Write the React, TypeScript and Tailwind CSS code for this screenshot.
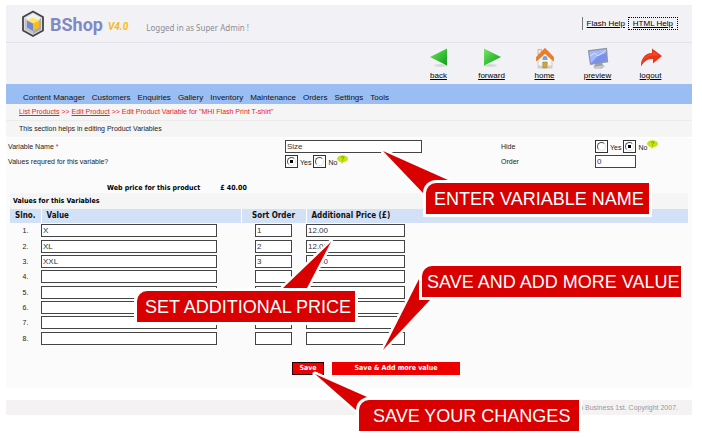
import type { ReactNode } from "react";

const menu = ["Content Manager", "Customers", "Enquiries", "Gallery", "Inventory", "Maintenance", "Orders", "Settings", "Tools"];

const rows = [
  { value: "X", order: "1", price: "12.00" },
  { value: "XL", order: "2", price: "12.00" },
  { value: "XXL", order: "3", price: "12.00" },
  { value: "", order: "", price: "" },
  { value: "", order: "", price: "" },
  { value: "", order: "", price: "" },
  { value: "", order: "", price: "" },
  { value: "", order: "", price: "" },
];

const field = "block h-[13px] border border-[#444] bg-white px-px text-[8px] leading-[11px] text-[#333] outline-none";
const verdana = "font-['DejaVu_Sans_Condensed','DejaVu_Sans',sans-serif] font-bold";

function Logo() {
  return (
    <svg width="24" height="28" viewBox="0 0 24 28" aria-hidden="true">
      <path d="M12 1.500 22 7v13.500L12 26 2 20.500V7z" fill="#d9dadd" stroke="#444448" strokeWidth="1.800" strokeLinejoin="round" />
      <path d="M12 3.500 20 8 12 12.500 4 8z" fill="#f0f1f3" />
      <path d="M4 8v11.500l8 4.500v-4z" fill="#c3c4c8" />
      <path d="M20 8v11.500L12 24v-4z" fill="#a9abb0" />
      <path d="M12 7.500 18 10.500 12 13.500 6 10.500z" fill="#ffe65c" />
      <path d="M6 10.500v7l6 3.500v-7.500z" fill="#7388d2" />
      <path d="M18 10.500v7L12 21v-7.500z" fill="#f9bd15" />
    </svg>
  );
}

function BackIcon() {
  return (
    <svg width="22" height="22" viewBox="0 0 22 22" aria-hidden="true">
      <defs>
        <linearGradient id="greenBack" x1="0" y1="0" x2="1" y2="1">
          <stop offset="0" stopColor="#7fe36c" />
          <stop offset="0.500" stopColor="#3bc43a" />
          <stop offset="1" stopColor="#109a1c" />
        </linearGradient>
      </defs>
      <ellipse cx="13" cy="18.500" rx="7" ry="1.500" fill="#d5d8d9" />
      <path d="M2 10 19 1.500v17z" fill="url(#greenBack)" />
    </svg>
  );
}

function ForwardIcon() {
  return (
    <svg width="22" height="22" viewBox="0 0 22 22" aria-hidden="true">
      <defs>
        <linearGradient id="greenForward" x1="0" y1="0" x2="1" y2="1">
          <stop offset="0" stopColor="#7fe36c" />
          <stop offset="0.500" stopColor="#3bc43a" />
          <stop offset="1" stopColor="#109a1c" />
        </linearGradient>
      </defs>
      <ellipse cx="9" cy="18.500" rx="7" ry="1.500" fill="#d5d8d9" />
      <path d="M20 10 3 1.500v17z" fill="url(#greenForward)" />
    </svg>
  );
}

function HomeIcon() {
  return (
    <svg width="22" height="22" viewBox="0 0 22 22" aria-hidden="true">
      <path d="M4 2.500h3.500V8H4z" fill="#f3e9e2" stroke="#c98a5c" strokeWidth="0.600" />
      <path d="M4 11 11 5l7 6v10H4z" fill="#f7f6f1" stroke="#b8b4a8" strokeWidth="0.600" />
      <path d="M11 1.200 2.500 10v4L11 6.500l8.500 7.500v-4z" fill="#ee7d26" stroke="#cf5f12" strokeWidth="0.500" />
      <path d="M8.500 11.500a2.500 2.500 0 0 1 5 0v1.500h-5z" fill="#78a3e0" />
      <path d="M8.800 15h4.400v6H8.800z" fill="#c9a64a" stroke="#9c7b2b" strokeWidth="0.500" />
      <path d="M4 18.500h4v2.500H4zM14 18.500h4v2.500h-4z" fill="#cfcfc8" />
    </svg>
  );
}

function PreviewIcon() {
  return (
    <svg width="22" height="22" viewBox="0 0 22 22" aria-hidden="true">
      <path d="M9 16h6l2 3.500-2 2H8l-1.500-1.500z" fill="#9ea2aa" />
      <path d="M6.500 19.800 17 18.500l1.500 1.300-9 2z" fill="#c9ccd3" />
      <path d="M.8 3.200 20 .8l1.200 14.400L3 18z" fill="#8f97a9" />
      <path d="M2.200 4.400 18.600 2.200l1 11.600L4 16.200z" fill="#7890f0" />
      <path d="M2.200 4.400 18.600 2.200l.3 3.800L11 9 4 16.200z" fill="#a5b8fb" />
      <path d="m3 9 5-3 3 3 8-6" fill="none" stroke="#dbe4ff" strokeWidth="0.900" />
    </svg>
  );
}

function LogoutIcon() {
  return (
    <svg width="22" height="22" viewBox="0 0 22 22" aria-hidden="true">
      <path d="M1 19.500C.5 12 5 6 12 6V1.500L22 9l-9 7.500V12C8 11.500 4 14 1 19.500z" fill="#ea3519" />
      <path d="M2 15.500C3 10 7 7.200 13 7.200V4l6 4.800C11 8 5 9.500 2 15.500z" fill="#f04a30" />
    </svg>
  );
}

const tools: { label: string; icon: ReactNode }[] = [
  { label: "back", icon: <BackIcon /> },
  { label: "forward", icon: <ForwardIcon /> },
  { label: "home", icon: <HomeIcon /> },
  { label: "preview", icon: <PreviewIcon /> },
  { label: "logout", icon: <LogoutIcon /> },
];

function HelpBubble() {
  return (
    <svg width="11" height="9" viewBox="0 0 11 9" className="-mt-1" role="img" aria-label="Help">
      <ellipse cx="5.500" cy="3.800" rx="5.500" ry="3.500" fill="#c3e514" />
      <path d="m4 6 .5 3L8 6z" fill="#c3e514" />
      <path d="M4.300 2.800c0-1.600 2.600-1.500 2.500 0 0 .9-1.200.9-1.200 1.800M5.600 5.500v.8" fill="none" stroke="#6f8a00" strokeWidth="0.900" />
    </svg>
  );
}

function Radio({ name, label, checked }: { name: string; label: string; checked?: boolean }) {
  return (
    <label className="flex items-center gap-0.5">
      <span className="flex size-[13px] items-center justify-center border border-[#333] bg-white">
        <input
          type="radio"
          name={name}
          defaultChecked={checked}
          className="size-[9px] appearance-none rounded-full border border-t-[#555] border-r-[#e4e4e4] border-b-[#e4e4e4] border-l-[#555] checked:bg-[radial-gradient(circle,#000_30%,transparent_40%)]"
        />
      </span>
      <span className="pt-0.5">{label}</span>
    </label>
  );
}

function RadioPair({ name, value }: { name: string; value: "Yes" | "No" }) {
  return (
    <div className="flex items-center">
      <div className="flex items-center gap-0.5">
        <Radio name={name} label="Yes" checked={value === "Yes"} />
        <Radio name={name} label="No" checked={value === "No"} />
      </div>
      <HelpBubble />
    </div>
  );
}

function Tail({ points }: { points: string }) {
  return (
    <g strokeLinejoin="round">
      <polygon points={points} fill="#fff" stroke="#fff" strokeWidth="5" />
      <polygon points={points} fill="#d80000" />
    </g>
  );
}

function Callout({ className, children }: { className: string; children: string }) {
  return (
    <div className={`absolute h-[31px] whitespace-nowrap rounded-tl-[10px] bg-[#d80000] text-[18px] leading-[32px] text-white ring-3 ring-white ${className}`}>
      {children}
    </div>
  );
}

export default function App() {
  return (
    <div className="relative bg-white pt-[5px] pr-[10px] pb-[23px] pl-[6px] font-['Liberation_Sans',Arial,sans-serif] text-[7px] leading-[9px] text-[#222]">
      <header className="bg-[#f2f2f6]">
        <div className="flex h-[38px] items-center border-b border-[#e2e3e9] pr-[14px] pl-[15px]">
          <Logo />
          <h1 className="ml-[5px] pt-0.5 font-[Roboto,sans-serif] text-[18px] leading-[24px] font-bold text-[#8189c4]">BShop</h1>
          <span className="ml-[5px] pt-1.5 font-[Roboto,sans-serif] text-[10px] leading-[12px] font-bold text-[#fbb814] italic">V4.0</span>
          <span className="ml-[18px] pt-2 font-['Noto_Sans',sans-serif] text-[8px] leading-[10px] text-[#8c8c92]">Logged in as Super Admin !</span>
          <div className="ml-auto flex h-[13px] items-stretch gap-[3px] text-[8px] leading-[13px] text-black">
            <a href="#flash" className="border-l border-[#777] pl-[4px] underline">Flash Help</a>
            <a href="#html" className="border border-dotted border-black px-[4px] leading-[11px] underline">HTML Help</a>
          </div>
        </div>
        <div className="flex h-[41px] justify-end pt-[4px] pr-[15px]">
          {tools.map((t) => (
            <a key={t.label} href={`#${t.label}`} className="flex w-[53px] flex-col items-center text-[8px] leading-[10px] text-black underline">
              {t.icon}
              <span className="mt-0.5">{t.label}</span>
            </a>
          ))}
        </div>
        <nav className="flex h-[20px] items-end gap-[7px] bg-[#9abdf4] pb-px pl-[17px] text-[8px] leading-[10px] text-[#111]">
          {menu.map((m) => (
            <a key={m} href="#menu">{m}</a>
          ))}
        </nav>
      </header>

      <main className="bg-[#fbfbfb]">
        <div className="border-b border-[#ececec] bg-[#f5f5f5] py-1 pl-[13px] leading-[8px] text-[#e8202a]">
          <a href="#list" className="underline">List Products</a> &gt;&gt; <a href="#edit" className="underline">Edit Product</a> &gt;&gt; Edit Product Variable for "MHI Flash Print T-shirt"
        </div>
        <div className="border-b border-white bg-[#f5f5f5] py-1 pl-[13px] leading-[8px]">This section helps in editing Product Variables</div>

        <div className="grid grid-cols-[277fr_216fr_94fr_97fr] auto-rows-[15px] items-center pt-px pl-[2px]">
          <label htmlFor="name">Variable Name <span className="text-[#e8202a]">*</span></label>
          <input id="name" defaultValue="Size" className={`${field} w-[137px]`} />
          <span>Hide</span>
          <RadioPair name="hide" value="No" />
          <span>Values requred for this variable?</span>
          <RadioPair name="required" value="Yes" />
          <label htmlFor="order">Order</label>
          <input id="order" defaultValue="0" className={`${field} w-[41px]`} />
        </div>

        <div className={`flex gap-[20px] pt-[15px] pl-[101px] text-black ${verdana}`}>
          <span>Web price for this product</span>
          <span>£ 40.00</span>
        </div>

        <div className="pr-[4px] pl-[4px]">
          <h2 className={`bg-[#f5f5f5] py-1 pl-[3px] leading-[8px] text-black ${verdana}`}>Values for this Variables</h2>
          <table className="h-[137px] w-full table-fixed border-collapse">
            <colgroup>
              <col className="w-[31px]" />
              <col className="w-[200px]" />
              <col className="w-[65px]" />
              <col />
            </colgroup>
            <thead>
              <tr className={`h-[14px] bg-[#d3e1f7] text-[8px] leading-[12px] text-[#111] ${verdana}`}>
                <th className="border-r border-white p-0">Slno.</th>
                <th className="border-r border-white p-0 pl-[5px] text-left">Value</th>
                <th className="border-r border-white p-0">Sort Order</th>
                <th className="p-0 pl-[5px] text-left">Additional Price (£)</th>
              </tr>
            </thead>
            <tbody>
              {rows.map((r, i) => (
                <tr key={i}>
                  <td className="p-0 text-center">{i + 1}.</td>
                  <td className="p-0">
                    <input aria-label={`Value ${i + 1}`} defaultValue={r.value} className={`${field} w-[176px]`} />
                  </td>
                  <td className="p-0">
                    <input aria-label={`Sort order ${i + 1}`} defaultValue={r.order} className={`${field} mx-auto w-[37px]`} />
                  </td>
                  <td className="p-0">
                    <input aria-label={`Additional price ${i + 1}`} defaultValue={r.price} className={`${field} w-[99px]`} />
                  </td>
                </tr>
              ))}
            </tbody>
          </table>
        </div>

        <div className="flex gap-2 pt-4 pb-[13px] pl-[286px]">
          <button className={`h-[13px] w-[32px] border border-[#300] bg-[#ee0000] leading-[11px] text-white ${verdana}`}>Save</button>
          <button className={`h-[13px] w-[128px] bg-[#ee0000] leading-[13px] text-white ${verdana}`}>Save &amp; Add more value</button>
        </div>
      </main>

      <footer className="mt-3 bg-[#f4f2f3] py-[3px] pr-[14px] text-right text-[#999]">n Business 1st. Copyright 2007.</footer>

      <svg className="pointer-events-none absolute top-0 left-0" width="702" height="438" viewBox="0 0 702 438" aria-hidden="true">
        <Tail points="383,151 448,180 440,200 423,193" />
        <Tail points="331,242 283,288 283,295 303,295 307,288" />
        <Tail points="383,350 419,279 430,285 430,300" />
        <Tail points="315,374 367,397 367,410 356,410" />
      </svg>
      <Callout className="top-[183px] left-[426px] w-[223px] pl-[8px]">ENTER VARIABLE NAME</Callout>
      <Callout className="top-[291px] left-[137px] w-[218px] pl-[8px]">SET ADDITIONAL PRICE</Callout>
      <Callout className="top-[266px] left-[422px] w-[259px] pl-[5px]">SAVE AND ADD MORE VALUE</Callout>
      <Callout className="top-[400px] left-[359px] w-[220px] pl-[14px]">SAVE YOUR CHANGES</Callout>
    </div>
  );
}
